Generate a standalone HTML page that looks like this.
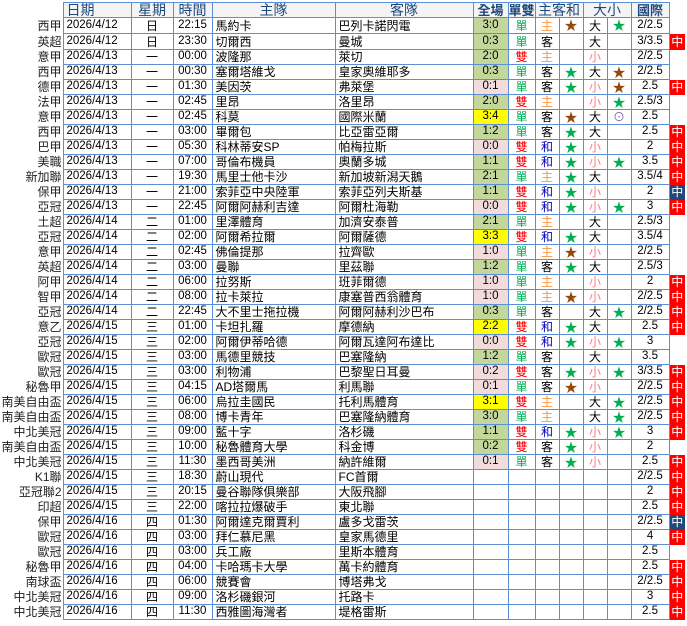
<!DOCTYPE html>
<html><head><meta charset="utf-8">
<style>
html,body{margin:0;padding:0;background:#fff;width:687px;height:626px;overflow:hidden}
table{border-collapse:collapse;table-layout:fixed;position:absolute;left:0;top:2px;
font-family:"Liberation Sans","Noto Sans CJK TC",sans-serif;font-size:12px;color:#000}
td{border:1px solid #5b8fd8;padding:0;white-space:nowrap;overflow:hidden;line-height:1;vertical-align:middle}
td.lg{border:none;text-align:right;padding-right:1px;color:#222}
td.bd{border:none;border-left:1px solid #5b8fd8;text-align:center}
tr.h td{height:14px;background:#f4f4f4;color:#1f497d;font-size:14px;text-align:center}
tr.h td.lg,tr.h td.bd{background:#fff}
tr.h td.b{font-weight:bold;font-size:13px}
tr.t td{height:15px}
tr.t2 td{height:14px}
td.d{padding-left:3px;font-size:11.5px}
td.c{text-align:center}
td.n{text-align:center;font-size:11.5px}
td.nm{padding-left:3px}
.G{background:#c4d79b}.P{background:#f2dcdb}.Y{background:#ffff00}
.s{color:#00b050}.w{color:#ff0000}.hm{color:#f79646}.dr{color:#0000c0}.sm{color:#ff7c80}
.sg{color:#00b050;font-size:13px}.sb{color:#974706;font-size:13px}.o{color:#8064a2}
.R{background:#ff0000;color:#fff;font-size:12px}.B{background:#1f497d;color:#fff;font-size:12px}
</style></head><body>
<table>
<colgroup><col style="width:63px"><col style="width:68px"><col style="width:42px"><col style="width:39px"><col style="width:123px"><col style="width:138px"><col style="width:35px"><col style="width:24px"><col style="width:24px"><col style="width:24px"><col style="width:24px"><col style="width:24px"><col style="width:38px"><col style="width:16px"></colgroup>
<tr class="h"><td class="lg"></td><td style="text-align:left;padding-left:3px">日期</td><td>星期</td><td>時間</td><td>主隊</td><td>客隊</td><td class="b">全場</td><td class="b">單雙</td><td colspan="2">主客和</td><td colspan="2">大小</td><td class="b">國際</td><td class="bd" style="border-left:none"></td></tr>
<tr class="t"><td class="lg">西甲</td><td class="d">2026/4/12</td><td class="c">日</td><td class="n">22:15</td><td class="nm">馬約卡</td><td class="nm">巴列卡諾閃電</td><td class="n G">3:0</td><td class="c s">單</td><td class="c hm">主</td><td class="c sb">★</td><td class="c">大</td><td class="c sg">★</td><td class="n">2/2.5</td><td class="bd"></td></tr>
<tr class="t"><td class="lg">英超</td><td class="d">2026/4/12</td><td class="c">日</td><td class="n">23:30</td><td class="nm">切爾西</td><td class="nm">曼城</td><td class="n G">0:3</td><td class="c s">單</td><td class="c">客</td><td></td><td class="c">大</td><td></td><td class="n">3/3.5</td><td class="bd R">中</td></tr>
<tr class="t2"><td class="lg">意甲</td><td class="d">2026/4/13</td><td class="c">一</td><td class="n">00:00</td><td class="nm">波隆那</td><td class="nm">萊切</td><td class="n G">2:0</td><td class="c w">雙</td><td class="c hm">主</td><td></td><td class="c sm">小</td><td></td><td class="n">2/2.5</td><td class="bd"></td></tr>
<tr class="t2"><td class="lg">西甲</td><td class="d">2026/4/13</td><td class="c">一</td><td class="n">00:30</td><td class="nm">塞爾塔維戈</td><td class="nm">皇家奧維耶多</td><td class="n G">0:3</td><td class="c s">單</td><td class="c">客</td><td class="c sg">★</td><td class="c">大</td><td class="c sb">★</td><td class="n">2/2.5</td><td class="bd"></td></tr>
<tr class="t2"><td class="lg">德甲</td><td class="d">2026/4/13</td><td class="c">一</td><td class="n">01:30</td><td class="nm">美因茨</td><td class="nm">弗萊堡</td><td class="n P">0:1</td><td class="c s">單</td><td class="c">客</td><td class="c sg">★</td><td class="c sm">小</td><td class="c sb">★</td><td class="n">2.5</td><td class="bd R">中</td></tr>
<tr class="t2"><td class="lg">法甲</td><td class="d">2026/4/13</td><td class="c">一</td><td class="n">02:45</td><td class="nm">里昂</td><td class="nm">洛里昂</td><td class="n G">2:0</td><td class="c w">雙</td><td class="c hm">主</td><td></td><td class="c sm">小</td><td class="c sg">★</td><td class="n">2.5/3</td><td class="bd"></td></tr>
<tr class="t2"><td class="lg">意甲</td><td class="d">2026/4/13</td><td class="c">一</td><td class="n">02:45</td><td class="nm">科莫</td><td class="nm">國際米蘭</td><td class="n Y">3:4</td><td class="c s">單</td><td class="c">客</td><td class="c sb">★</td><td class="c">大</td><td class="c o">⊙</td><td class="n">2.5</td><td class="bd"></td></tr>
<tr class="t2"><td class="lg">西甲</td><td class="d">2026/4/13</td><td class="c">一</td><td class="n">03:00</td><td class="nm">畢爾包</td><td class="nm">比亞雷亞爾</td><td class="n G">1:2</td><td class="c s">單</td><td class="c">客</td><td class="c sg">★</td><td class="c">大</td><td></td><td class="n">2.5</td><td class="bd R">中</td></tr>
<tr class="t2"><td class="lg">巴甲</td><td class="d">2026/4/13</td><td class="c">一</td><td class="n">05:30</td><td class="nm">科林蒂安SP</td><td class="nm">帕梅拉斯</td><td class="n P">0:0</td><td class="c w">雙</td><td class="c dr">和</td><td class="c sg">★</td><td class="c sm">小</td><td></td><td class="n">2</td><td class="bd R">中</td></tr>
<tr class="t2"><td class="lg">美職</td><td class="d">2026/4/13</td><td class="c">一</td><td class="n">07:00</td><td class="nm">哥倫布機員</td><td class="nm">奧蘭多城</td><td class="n G">1:1</td><td class="c w">雙</td><td class="c dr">和</td><td class="c sg">★</td><td class="c sm">小</td><td class="c sg">★</td><td class="n">3.5</td><td class="bd R">中</td></tr>
<tr class="t2"><td class="lg">新加聯</td><td class="d">2026/4/13</td><td class="c">一</td><td class="n">19:30</td><td class="nm">馬里士他卡沙</td><td class="nm">新加坡新潟天鵝</td><td class="n G">2:1</td><td class="c s">單</td><td class="c hm">主</td><td class="c sg">★</td><td class="c">大</td><td></td><td class="n">3.5/4</td><td class="bd R">中</td></tr>
<tr class="t2"><td class="lg">保甲</td><td class="d">2026/4/13</td><td class="c">一</td><td class="n">21:00</td><td class="nm">索菲亞中央陸軍</td><td class="nm">索菲亞列夫斯基</td><td class="n G">1:1</td><td class="c w">雙</td><td class="c dr">和</td><td class="c sg">★</td><td class="c sm">小</td><td></td><td class="n">2</td><td class="bd B">中</td></tr>
<tr class="t2"><td class="lg">亞冠</td><td class="d">2026/4/13</td><td class="c">一</td><td class="n">22:45</td><td class="nm">阿爾阿赫利吉達</td><td class="nm">阿爾杜海勒</td><td class="n P">0:0</td><td class="c w">雙</td><td class="c dr">和</td><td class="c sg">★</td><td class="c sm">小</td><td class="c sg">★</td><td class="n">3</td><td class="bd R">中</td></tr>
<tr class="t2"><td class="lg">土超</td><td class="d">2026/4/14</td><td class="c">二</td><td class="n">01:00</td><td class="nm">里澤體育</td><td class="nm">加濟安泰普</td><td class="n G">2:1</td><td class="c s">單</td><td class="c hm">主</td><td></td><td class="c">大</td><td></td><td class="n">2.5/3</td><td class="bd"></td></tr>
<tr class="t2"><td class="lg">亞冠</td><td class="d">2026/4/14</td><td class="c">二</td><td class="n">02:00</td><td class="nm">阿爾希拉爾</td><td class="nm">阿爾薩德</td><td class="n Y">3:3</td><td class="c w">雙</td><td class="c dr">和</td><td class="c sg">★</td><td class="c">大</td><td></td><td class="n">3.5/4</td><td class="bd"></td></tr>
<tr class="t2"><td class="lg">意甲</td><td class="d">2026/4/14</td><td class="c">二</td><td class="n">02:45</td><td class="nm">佛倫提那</td><td class="nm">拉齊歐</td><td class="n P">1:0</td><td class="c s">單</td><td class="c hm">主</td><td class="c sb">★</td><td class="c sm">小</td><td></td><td class="n">2/2.5</td><td class="bd"></td></tr>
<tr class="t2"><td class="lg">英超</td><td class="d">2026/4/14</td><td class="c">二</td><td class="n">03:00</td><td class="nm">曼聯</td><td class="nm">里茲聯</td><td class="n G">1:2</td><td class="c s">單</td><td class="c">客</td><td class="c sg">★</td><td class="c">大</td><td></td><td class="n">2.5/3</td><td class="bd"></td></tr>
<tr class="t2"><td class="lg">阿甲</td><td class="d">2026/4/14</td><td class="c">二</td><td class="n">06:00</td><td class="nm">拉努斯</td><td class="nm">班菲爾德</td><td class="n P">1:0</td><td class="c s">單</td><td class="c hm">主</td><td></td><td class="c sm">小</td><td></td><td class="n">2</td><td class="bd R">中</td></tr>
<tr class="t2"><td class="lg">智甲</td><td class="d">2026/4/14</td><td class="c">二</td><td class="n">08:00</td><td class="nm">拉卡萊拉</td><td class="nm">康塞普西翁體育</td><td class="n P">1:0</td><td class="c s">單</td><td class="c hm">主</td><td class="c sb">★</td><td class="c sm">小</td><td></td><td class="n">2/2.5</td><td class="bd R">中</td></tr>
<tr class="t2"><td class="lg">亞冠</td><td class="d">2026/4/14</td><td class="c">二</td><td class="n">22:45</td><td class="nm">大不里士拖拉機</td><td class="nm">阿爾阿赫利沙巴布</td><td class="n G">0:3</td><td class="c s">單</td><td class="c">客</td><td></td><td class="c">大</td><td class="c sg">★</td><td class="n">2/2.5</td><td class="bd R">中</td></tr>
<tr class="t2"><td class="lg">意乙</td><td class="d">2026/4/15</td><td class="c">三</td><td class="n">01:00</td><td class="nm">卡坦扎羅</td><td class="nm">摩德納</td><td class="n Y">2:2</td><td class="c w">雙</td><td class="c dr">和</td><td class="c sg">★</td><td class="c">大</td><td></td><td class="n">2.5</td><td class="bd R">中</td></tr>
<tr class="t2"><td class="lg">亞冠</td><td class="d">2026/4/15</td><td class="c">三</td><td class="n">02:00</td><td class="nm">阿爾伊蒂哈德</td><td class="nm">阿爾瓦達阿布達比</td><td class="n P">0:0</td><td class="c w">雙</td><td class="c dr">和</td><td class="c sg">★</td><td class="c sm">小</td><td class="c sg">★</td><td class="n">3</td><td class="bd"></td></tr>
<tr class="t2"><td class="lg">歐冠</td><td class="d">2026/4/15</td><td class="c">三</td><td class="n">03:00</td><td class="nm">馬德里競技</td><td class="nm">巴塞隆納</td><td class="n G">1:2</td><td class="c s">單</td><td class="c">客</td><td></td><td class="c">大</td><td></td><td class="n">3.5</td><td class="bd"></td></tr>
<tr class="t2"><td class="lg">歐冠</td><td class="d">2026/4/15</td><td class="c">三</td><td class="n">03:00</td><td class="nm">利物浦</td><td class="nm">巴黎聖日耳曼</td><td class="n P">0:2</td><td class="c w">雙</td><td class="c">客</td><td class="c sg">★</td><td class="c sm">小</td><td class="c sg">★</td><td class="n">3/3.5</td><td class="bd R">中</td></tr>
<tr class="t2"><td class="lg">秘魯甲</td><td class="d">2026/4/15</td><td class="c">三</td><td class="n">04:15</td><td class="nm">AD塔爾馬</td><td class="nm">利馬聯</td><td class="n P">0:1</td><td class="c s">單</td><td class="c">客</td><td class="c sb">★</td><td class="c sm">小</td><td></td><td class="n">2/2.5</td><td class="bd R">中</td></tr>
<tr class="t2"><td class="lg">南美自由盃</td><td class="d">2026/4/15</td><td class="c">三</td><td class="n">06:00</td><td class="nm">烏拉圭國民</td><td class="nm">托利馬體育</td><td class="n Y">3:1</td><td class="c w">雙</td><td class="c hm">主</td><td></td><td class="c">大</td><td class="c sg">★</td><td class="n">2/2.5</td><td class="bd R">中</td></tr>
<tr class="t2"><td class="lg">南美自由盃</td><td class="d">2026/4/15</td><td class="c">三</td><td class="n">08:00</td><td class="nm">博卡青年</td><td class="nm">巴塞隆納體育</td><td class="n G">3:0</td><td class="c s">單</td><td class="c hm">主</td><td></td><td class="c">大</td><td class="c sg">★</td><td class="n">2/2.5</td><td class="bd R">中</td></tr>
<tr class="t2"><td class="lg">中北美冠</td><td class="d">2026/4/15</td><td class="c">三</td><td class="n">09:00</td><td class="nm">藍十字</td><td class="nm">洛杉磯</td><td class="n G">1:1</td><td class="c w">雙</td><td class="c dr">和</td><td class="c sg">★</td><td class="c sm">小</td><td class="c sg">★</td><td class="n">3</td><td class="bd R">中</td></tr>
<tr class="t2"><td class="lg">南美自由盃</td><td class="d">2026/4/15</td><td class="c">三</td><td class="n">10:00</td><td class="nm">秘魯體育大學</td><td class="nm">科金博</td><td class="n G">0:2</td><td class="c w">雙</td><td class="c">客</td><td class="c sg">★</td><td class="c sm">小</td><td></td><td class="n">2</td><td class="bd"></td></tr>
<tr class="t2"><td class="lg">中北美冠</td><td class="d">2026/4/15</td><td class="c">三</td><td class="n">11:30</td><td class="nm">墨西哥美洲</td><td class="nm">納許維爾</td><td class="n P">0:1</td><td class="c s">單</td><td class="c">客</td><td class="c sg">★</td><td class="c sm">小</td><td></td><td class="n">2.5</td><td class="bd R">中</td></tr>
<tr class="t2"><td class="lg">K1聯</td><td class="d">2026/4/15</td><td class="c">三</td><td class="n">18:30</td><td class="nm">蔚山現代</td><td class="nm">FC首爾</td><td></td><td></td><td></td><td></td><td></td><td></td><td class="n">2/2.5</td><td class="bd R">中</td></tr>
<tr class="t2"><td class="lg">亞冠聯2</td><td class="d">2026/4/15</td><td class="c">三</td><td class="n">20:15</td><td class="nm">曼谷聯隊俱樂部</td><td class="nm">大阪飛腳</td><td></td><td></td><td></td><td></td><td></td><td></td><td class="n">2</td><td class="bd R">中</td></tr>
<tr class="t2"><td class="lg">印超</td><td class="d">2026/4/15</td><td class="c">三</td><td class="n">22:00</td><td class="nm">喀拉拉爆破手</td><td class="nm">東北聯</td><td></td><td></td><td></td><td></td><td></td><td></td><td class="n">2.5</td><td class="bd R">中</td></tr>
<tr class="t2"><td class="lg">保甲</td><td class="d">2026/4/16</td><td class="c">四</td><td class="n">01:30</td><td class="nm">阿爾達克爾賈利</td><td class="nm">盧多戈雷茨</td><td></td><td></td><td></td><td></td><td></td><td></td><td class="n">2/2.5</td><td class="bd B">中</td></tr>
<tr class="t2"><td class="lg">歐冠</td><td class="d">2026/4/16</td><td class="c">四</td><td class="n">03:00</td><td class="nm">拜仁慕尼黑</td><td class="nm">皇家馬德里</td><td></td><td></td><td></td><td></td><td></td><td></td><td class="n">4</td><td class="bd R">中</td></tr>
<tr class="t2"><td class="lg">歐冠</td><td class="d">2026/4/16</td><td class="c">四</td><td class="n">03:00</td><td class="nm">兵工廠</td><td class="nm">里斯本體育</td><td></td><td></td><td></td><td></td><td></td><td></td><td class="n">2.5</td><td class="bd"></td></tr>
<tr class="t2"><td class="lg">秘魯甲</td><td class="d">2026/4/16</td><td class="c">四</td><td class="n">04:00</td><td class="nm">卡哈瑪卡大學</td><td class="nm">萬卡約體育</td><td></td><td></td><td></td><td></td><td></td><td></td><td class="n">2.5</td><td class="bd R">中</td></tr>
<tr class="t2"><td class="lg">南球盃</td><td class="d">2026/4/16</td><td class="c">四</td><td class="n">06:00</td><td class="nm">競賽會</td><td class="nm">博塔弗戈</td><td></td><td></td><td></td><td></td><td></td><td></td><td class="n">2/2.5</td><td class="bd R">中</td></tr>
<tr class="t2"><td class="lg">中北美冠</td><td class="d">2026/4/16</td><td class="c">四</td><td class="n">09:00</td><td class="nm">洛杉磯銀河</td><td class="nm">托路卡</td><td></td><td></td><td></td><td></td><td></td><td></td><td class="n">3</td><td class="bd R">中</td></tr>
<tr class="t2"><td class="lg">中北美冠</td><td class="d">2026/4/16</td><td class="c">四</td><td class="n">11:30</td><td class="nm">西雅圖海灣者</td><td class="nm">堤格雷斯</td><td></td><td></td><td></td><td></td><td></td><td></td><td class="n">2.5</td><td class="bd R">中</td></tr>
</table>
</body></html>
